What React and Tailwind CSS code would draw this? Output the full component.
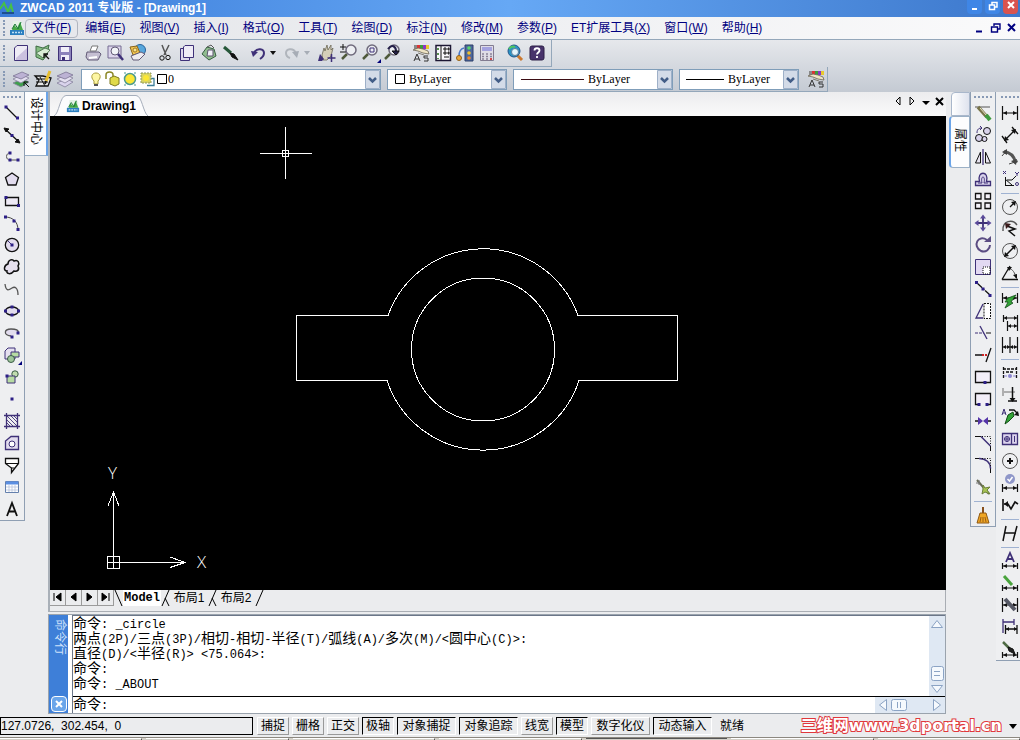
import clsx from "clsx"

const P = "#3f3178" // dark purple used by most tool icons
const L = "#d9d3ec" // lilac fill

const Svg = ({ children }) => (
  <svg viewBox="0 0 20 20" className="h-5 w-5 shrink-0" fill="none" stroke="#111" aria-hidden="true">
    {children}
  </svg>
)

const Dot = ({ x, y }) => <rect x={x - 1.5} y={y - 1.5} width="3" height="3" fill="#2c1f86" stroke="none" />
const Flyout = () => <path d="M20 16v4h-4z" fill="#00007a" stroke="none" />
const Lens = ({ x = 12, y = 7 }) => (
  <>
    <path d={`M${x - 4} ${y + 4}L${x - 9} ${y + 9}`} stroke="#4f5a3c" strokeWidth="2.5" />
    <circle cx={x} cy={y} r="5" fill="#eceef2" stroke="#6f6a7c" strokeWidth="1.5" />
  </>
)
const Layers = ({ bottom = L }) => (
  <>
    <path d="M2 14l9-4 7 3-8 5z" fill={bottom} stroke="#85809c" strokeWidth=".8" />
    <path d="M2 10l9-4 7 3-8 5z" fill="#e4e0f0" stroke="#85809c" strokeWidth=".8" />
    <path d="M2 7l9-4 7 3-8 4z" fill="#bcb2d4" stroke="#7c7594" strokeWidth=".8" />
  </>
)
const MatchProps = () => (
  <>
    <path d="M3 4h3" stroke="#888" strokeWidth="4" />
    <path d="M6 4h3" stroke="#d33" strokeWidth="4" />
    <path d="M9 4h3" stroke="#3a9d3a" strokeWidth="4" />
    <path d="M12 4h3" stroke="#8b35c8" strokeWidth="4" />
    <path d="M15 4h3" stroke="#e9c92c" strokeWidth="4" />
    <path d="M2 7l5 1 5 2 6 1-1-3-5-2-5-1zM7 10l6 2" fill="#eee4c4" stroke="#6b6554" strokeWidth=".8" />
    <path d="M3 18l3-7 3 7M4 16h4M17 13h-4v2h4v3h-4" stroke="#333" />
  </>
)
const DimLine = ({ y = 10, t = 5 }) => (
  <>
    <path d={`M2.5 ${y - t}v${t * 2}M17.5 ${y - t}v${t * 2}M3 ${y}h14`} strokeWidth="1.2" />
    <path d={`M3 ${y}l4-2v4zM17 ${y}l-4-2v4z`} fill="#111" stroke="none" />
  </>
)
const Bolt = () => <path d="M17 2l-9 4-4 10 5-3 1 5 7-9-4 1z" fill="#32a336" stroke="#124d16" strokeWidth=".8" />

const icons = {
  newFile: <><path d="M6 2.500h10.500v15h-13V5z" fill="#eeebf5" stroke={P} /><path d="M5 15l11-10v12H5z" fill="#cbc1df" stroke="none" /></>,
  open: <><path d="M3 3l7 2 6-3-2 10-4 5-7-3z" fill="#85bd82" stroke="#3d6b43" /><path d="M3 10l9-5 5 2-7 8z" fill="#d8edd5" stroke="#547c56" /><path d="M16 16l-5-5m0 4v-4h4" strokeWidth="1.3" /></>,
  save: <><path d="M3.500 3.500h13v14h-13z" fill="#8d83bb" stroke={P} /><path d="M6 4h8v5H6zM6 12h8v5H6z" fill="#f1eff8" stroke="none" /><path d="M7 14h3v3H7z" fill={P} stroke="none" /></>,
  print: <><path d="M7 8l2-5h6l-2 5z" fill="#fff" stroke="#777" /><path d="M4 9h12l2 2-3 6H5l-2-3z" fill="#c5bfd2" stroke="#635b77" /><path d="M6 15l8-1" stroke="#fff" strokeWidth="2" /></>,
  preview: <><path d="M3 3h13v12H3z" fill="#ddd6ec" stroke="#746b91" /><circle cx="10" cy="8" r="4" fill="#f2f4f7" stroke="#635b77" /><path d="M13 11l5 6" stroke={P} strokeWidth="2.5" /></>,
  publish: <><circle cx="13" cy="7" r="5.500" fill="#58a7dc" stroke="#28629b" /><path d="M3 4l7-1 3 7-7 2z" fill="#f3c551" stroke="#8a651b" /><circle cx="8" cy="7" r="2" fill="#fbe48c" stroke="#8a651b" strokeWidth=".8" /><path d="M4 13l10-4 4 2-6 6H6z" fill="#eeecf1" stroke="#635b77" /></>,
  cut: <><path d="M7 2l4 10M14 2L9 12" stroke="#555" strokeWidth="1.5" /><circle cx="7" cy="15" r="2.200" /><circle cx="13" cy="14.500" r="2.200" /></>,
  copy: <><path d="M3.500 5.500h9v12h-9z" fill="#ddd7ea" stroke={P} /><path d="M8 2.500h8.500v12H6.500V4z" fill="#efecf6" stroke={P} /></>,
  paste: <><path d="M8 4l7 2 2 7-7 4-7-6z" fill="#91bd90" stroke="#376041" /><path d="M9 7h5v6H8z" fill="#f4f2fa" stroke="#5c556e" /><path d="M8 4l4-2 3 3" stroke="#555" /></>,
  brush: <><path d="M3 4l7 6" stroke="#27583a" strokeWidth="3" /><path d="M9 10l4 1 4 6-6-3z" fill="#111" /></>,
  undo: <><path d="M6 10c3-6 10-4 10 0 0 2-1 4-4 6" stroke={P} strokeWidth="2" /><path d="M3 8l7 1-5 5z" fill={P} stroke="none" /></>,
  redo: <><path d="M14 10c-3-6-10-4-10 0 0 2 1 4 4 5" stroke="#b0b5bc" strokeWidth="2" /><path d="M17 8l-7 1 5 6z" fill="#a7adb6" stroke="none" /></>,
  pan: <><path d="M5 12l2-7 1 3 2-6 1 5 3-5v5l2-2-2 8-4 4H6z" fill="#d4ceb8" stroke="#6c6856" strokeWidth=".8" /><path d="M3 11l4 5-2 2H1z" fill={P} stroke="none" /><path d="M14.500 11v8M10.500 15h8" stroke={P} strokeWidth="1.500" /></>,
  zoomRt: <><Lens /><path d="M1 4h6M4 1v6M1 9h6" /></>,
  zoomWin: <><Lens x={11} /><path d="M9 5h4v4H9z" stroke={P} /><Flyout /></>,
  zoomPrev: <><Lens x={11} /><path d="M5 6c4-6 8-2 8 2" stroke="#25204a" strokeWidth="2" /><path d="M9 8h7l-3 4z" fill="#25204a" /></>,
  props: <MatchProps />,
  design: <><path d="M3 2.500h14.500v15H3z" fill="#f8f8fb" stroke="#1c1733" strokeWidth="1.500" /><path d="M8 3v14" /><path d="M5 5v2m0 3v2m0 3v1" stroke="#5a9150" strokeWidth="2" /><path d="M11 5h2v2h-2zM15 5h1v2h-1zM11 9h2v2h-2zM15 9h1v2h-1zM11 14h5" /></>,
  palette: <><path d="M10 2h8v16h-8z" fill="#4e689d" stroke="#2c3e68" /><circle cx="14" cy="5" r="1.800" fill="#58d768" stroke="none" /><circle cx="14" cy="10" r="1.800" fill="#eec12d" stroke="none" /><circle cx="14" cy="15" r="1.800" fill="#ee872d" stroke="none" /><path d="M9 5c-4 1-5 5-5 8" stroke="#4b79c7" strokeWidth="1.500" /><circle cx="4" cy="15" r="2.500" fill="#eaa83c" stroke="#936117" /></>,
  calc: <><path d="M3.500 2.500h13v15h-13z" fill="#dfdce6" stroke="#827c91" /><path d="M5 4h10v4H5z" fill="#a4a2df" stroke="none" /><path d="M5 11h2m2 0h2m2 0h2M5 13.500h2m2 0h2m2 0h2M5 16h2m2 0h2" stroke="#8a8298" strokeWidth="1.500" /><path d="M13 16h2" stroke="#d34a4a" strokeWidth="2" /></>,
  find: <><path d="M12 12l5 5" stroke="#cb7930" strokeWidth="3" /><circle cx="9" cy="8" r="6" fill="#2a93c3" stroke="#22558b" /><circle cx="10" cy="9" r="3.500" fill="#e5f5fb" stroke="#5a7d9b" /><path d="M4 6c2-3 4-3 6-2" stroke="#4ec661" strokeWidth="2" /></>,
  help: <><rect x="3" y="3" width="14" height="14" rx="2" fill="#48336b" stroke="#2c1f47" /><path d="M7.500 7.500c0-3 5-3 5 0 0 2-2.500 2-2.500 4M10 13v2" stroke="#fff" strokeWidth="1.800" /></>,
  layerPrev: <><Layers bottom="#3fa04d" /><path d="M18 18l-5-5m0 4v-4h4" /></>,
  layerMgr: <><path d="M2 7h8l8 2-3 8H3l3-6z" fill="#e8e8e8" strokeWidth="1.300" /><path d="M3 10h10M3 13h12M7 8l5 9" /><path d="M17 2l-4 10" stroke="#e6bd2e" strokeWidth="3" /><path d="M13 12l-1 3" strokeWidth="2" /></>,
  layerAll: <Layers />,
}

const drawIcons = {
  直线: <><path d="M4 4l11 11" strokeWidth="1.300" /><Dot x={4} y={4} /><Dot x={15.500} y={15} /></>,
  构造线: <><path d="M3 4l14 13" strokeWidth="1.300" /><path d="M2 3l5 1-3 3zM18 18l-5-1 3-3z" fill="#111" /><Dot x={10} y={10.500} /></>,
  多段线: <><path d="M9 6c-6-1-6 8 0 7h6" stroke="#555" /><Dot x={8} y={6} /><Dot x={8} y={13} /><Dot x={16} y={13} /></>,
  正多边形: <path d="M10 4l6.500 4.500-2.500 7.500H6L3.500 8.500z" fill="#e2dcee" strokeWidth="1.300" />,
  矩形: <><path d="M3.500 6.500h13v8h-13z" fill="#eeeaf5" strokeWidth="1.300" /><Dot x={4} y={6.500} /><Dot x={16.500} y={14.500} /></>,
  圆弧: <><path d="M3 4c8 0 13 5 13 13" stroke="#444" /><Dot x={3.500} y={4} /><Dot x={12} y={8} /><Dot x={16} y={16.500} /></>,
  圆: <><circle cx="10" cy="10" r="6.700" fill="#e2dcee" strokeWidth="1.300" /><path d="M10 10L6 6" stroke={P} /><Dot x={10} y={10} /></>,
  修订云线: <path d="M6 7c0-5 5-5 6-3 4-2 6 2 4 5 2 4-1 6-4 5-3 4-8 3-7 0-4 0-3-6 1-7z" fill="#e6e0ee" strokeWidth="1.500" />,
  样条曲线: <path d="M3 5c1 8 4 6 7 4s6 0 6 7" stroke="#555" strokeWidth="1.300" />,
  椭圆: <><ellipse cx="10" cy="10" rx="6.500" ry="4" fill="#e2dcee" strokeWidth="1.300" /><Dot x={3.500} y={10} /><Dot x={16.500} y={10} /><Dot x={10} y={6} /><Dot x={10} y={14} /></>,
  椭圆弧: <><path d="M9 13c-8-1-7-7 0-7 5 0 8 1 7 4" fill="#e2dcee" stroke="#555" strokeWidth="1.300" /><Dot x={10} y={14} /><Dot x={16} y={10} /></>,
  插入块: <><path d="M6 3h7v11H3V6z" fill="#e5e0f0" stroke={P} /><path d="M9 7h8v5H9z" fill="#b7dba3" stroke={P} /><circle cx="9" cy="14" r="3.500" fill="#9fc59a" stroke="#3a5b46" /><Flyout /></>,
  创建块: <><circle cx="13" cy="7" r="3.200" fill="#c0dcae" stroke="#3a5b46" /><path d="M5 9h8v7H5z" fill="#b7dba3" stroke={P} /><Dot x={5} y={9} /></>,
  点: <Dot x={10} y={10} />,
  图案填充: <><path d="M4.500 2v16M15.500 2v16M2 4.500h16M2 15.500h16" stroke={P} strokeWidth="1.300" /><path d="M5 9l6 6M5 5l10 10M9 5l6 6M5 12l3 3M12 5l3 3" stroke={P} strokeWidth=".9" /></>,
  面域: <><path d="M9 3.500h7.500v13h-13V8z" fill="#e2dcee" stroke={P} strokeWidth="1.300" /><circle cx="10" cy="11" r="3" stroke={P} fill="#fff" /></>,
  宽线: <><path d="M3.500 3.500h13v5l-7 9V13l-6-4.500z" fill="#fff" strokeWidth="1.300" /><path d="M3.500 8.500h13M9.500 13h3" /></>,
  表格: <><path d="M3.500 4.500h13v11h-13z" fill="#fff" stroke="#6480ad" /><path d="M4 6h12" stroke="#5b8fe2" strokeWidth="3" /><path d="M4 10h12M4 13h12M7 8v7M10 8v7M13 8v7" stroke="#b6c3dc" strokeWidth=".8" /></>,
  多行文字: <path d="M5 17l5-13 5 13M6.500 12.500h7" strokeWidth="1.800" />,
}

const modifyIcons = [
  ["删除", <><path d="M2 4h15" stroke="#555" /><path d="M5 4l9 10" stroke="#777348" strokeWidth="3.500" /><path d="M7 5l7 8" stroke="#e9e6c8" /><path d="M13 12l4 5" stroke="#3d9a3d" strokeWidth="4" /></>],
  ["复制对象", <><circle cx="14" cy="6" r="3.500" fill={L} /><circle cx="6" cy="13" r="3.500" fill={L} /><circle cx="11.500" cy="14" r="2.500" fill={L} /><path d="M4 8c0-4 2-5 5-5M7 1l2 2-2 2" stroke={P} /></>],
  ["镜像", <><path d="M7.500 5v11H2.500zM12.500 5v11h5z" fill="#e8e4f0" /><path d="M10 2v16" stroke={P} strokeWidth="1.300" /></>],
  ["偏移", <><path d="M2.500 16.500v-4h4c-3-11 10-11 7 0h4v4z" fill={L} stroke={P} strokeWidth="1.300" /><path d="M5 14h4c-2-8 4-8 2 0h4" stroke={P} /></>],
  ["阵列", <path d="M2.500 2.500h5.500v5.500H2.500zM12 2.500h5.500v5.500H12zM2.500 12h5.500v5.500H2.500zM12 12h5.500v5.500H12z" fill="#f5f3fa" strokeWidth="1.300" />],
  ["移动", <><path d="M10 3v14M3 10h14" stroke={P} strokeWidth="1.800" /><path d="M10 1.500l3 4H7zM10 18.500l3-4H7zM1.500 10l4-3v6zM18.500 10l-4-3v6z" fill="#5a4a9a" stroke="none" /></>],
  ["旋转", <><path d="M14 5c-9-6-15 6-6 11 5 2 9-2 9-6" stroke="#5b4d83" strokeWidth="2" /><path d="M11 7h7V1z" fill="#5b4d83" stroke="none" /></>],
  ["缩放", <><path d="M2.500 2.500h15v15h-15z" fill="#e2d9f2" stroke={P} /><path d="M10 10h7v7h-7z" fill="#fff" strokeDasharray="1 1" /></>],
  ["拉伸", <><path d="M4 4l13 12" strokeWidth="1.300" strokeDasharray="7 1 2 1" /><Dot x={3.500} y={3.500} /><Dot x={10} y={10} /><Dot x={17} y={16.500} /></>],
  ["锥化", <><path d="M10 3L3 17h7" stroke={P} strokeWidth="1.300" /><path d="M11 2.500h6.500v15H11z" fill="#fff" strokeDasharray="2 1" /></>],
  ["修剪", <><path d="M7 3l7 13" stroke={P} strokeWidth="1.300" /><path d="M2 10h9" stroke={P} strokeDasharray="3 1" /><path d="M13 10h5" /></>],
  ["延伸", <><path d="M2 10h8" strokeWidth="1.500" /><path d="M9 10h5" stroke="#c22" strokeWidth="2" strokeDasharray="2 1" /><path d="M18 3l-5 14" strokeWidth="1.300" /></>],
  ["打断于点", <><path d="M2.500 4.500h15v11h-15z" fill="#f2eef8" strokeWidth="1.300" /><Dot x={12} y={15.500} /></>],
  ["打断", <><path d="M5 15.500H2.500v-11h15v11H15" fill="#f2eef8" strokeWidth="1.300" /><Dot x={6} y={15.500} /><Dot x={14} y={15.500} /></>],
  ["合并", <><path d="M2 10h4M14 10h4" strokeWidth="1.500" /><path d="M5 6l5 4-5 4zM15 6l-5 4 5 4z" fill="#5434a8" stroke="none" /></>],
  ["倒角", <><path d="M2 3.500h6M17.500 13v5" /><path d="M8 3.500l9.500 9.500" stroke={P} strokeWidth="1.500" /><path d="M9 3.500h8.500V12" strokeDasharray="1 1.500" /></>],
  ["圆角", <><path d="M2 3.500h5M17.500 13v5" /><path d="M6 3.500c7 0 11.500 4 11.500 10" stroke={P} strokeWidth="1.500" /><path d="M9 3.500h8.500V12" strokeDasharray="1 1.500" /></>],
  ["分解", <><path d="M4 3l6 7 6 7" stroke="#676a55" strokeWidth="2" /><path d="M3 6h4M6 3v5" stroke="#777" /><path d="M10 8l2 3 5-1-3 3 3 4-5-2-3 2 1-5z" fill="#a7c453" stroke="#6c803c" /></>],
  null,
  ["清理", <><path d="M10 2v6" stroke="#884f1b" strokeWidth="2" /><path d="M7 8h6l3 10H4z" fill="#efa624" stroke="#8f5914" /><path d="M7 17l1-5M10 17v-5M13 17l-1-5" stroke="#9b5e14" /></>],
]

const dimIcons = [
  ["线性标注", <DimLine t={7} />],
  ["对齐标注", <><path d="M5 15L15 5M2 11l5 7M12 2l6 7" strokeWidth="1.300" /><path d="M4 16l1-5 4 4zM16 4l-5 1 4 4z" fill="#111" stroke="none" /></>],
  ["弧长标注", <><path d="M4 5c6 0 10 4 12 11" stroke="#555" strokeWidth="3" /><path d="M2 9l5-6M9 17l9-3" stroke="#444" /><path d="M2 5l5-3v6zM16 18l-5-4 6-2z" fill="#444" stroke="none" /></>],
  ["坐标标注", <><path d="M5.500 17V8M5 16.500h9M5 10l7 6M7 11h5l4-4" /><path d="M3 2l3 3m0-3L3 5M15 3l2 2 2-2m-2 2v2" stroke={P} /><circle cx="17" cy="15" r="1.500" stroke={P} /></>],
  null,
  ["半径标注", <><circle cx="10" cy="10" r="7.500" stroke="#555" /><path d="M10 10l4-4" strokeWidth="1.300" /><path d="M16 4l-1 5-4-4z" fill="#111" stroke="none" /></>],
  ["折弯标注", <><path d="M3 12C2 1 13 0 17 6" stroke="#555" strokeWidth="1.500" /><path d="M7 7l8 3-6 2 6 5" strokeWidth="1.500" /><path d="M5 4l6 1-5 5z" fill="#3b1b1b" stroke="none" /></>],
  ["直径标注", <><circle cx="10" cy="10" r="7.500" stroke="#555" /><path d="M5 15L15 5" strokeWidth="1.500" /><path d="M4 16l1-5 4 4zM16 4l-1 5-4-4z" fill="#111" stroke="none" /></>],
  ["角度标注", <><path d="M2 16.500h16M2 16.500L10 3" strokeWidth="1.300" /><path d="M8 5c5 1 7 5 8 10" stroke="#555" /><path d="M7 4l5 0-3 4zM17 16l-4-4 4-1z" fill="#111" stroke="none" /></>],
  null,
  ["快速标注", <><DimLine y={7} /><path d="M16 4l-8 3-3 4 3 0-3 6 8-5-2-1z" fill="#32a336" stroke="#124d16" strokeWidth=".8" /></>],
  ["基线标注", <><path d="M3.500 2v7M17.500 2v16M7.500 8v10M4 5h13M8 13h9" strokeWidth="1.200" /><path d="M4 5l3-2v4zM17 5l-3-2v4zM8 13l3-2v4zM17 13l-3-2v4z" fill="#111" stroke="none" /></>],
  ["连续标注", <><path d="M2.500 2v16M10 2v16M17.500 2v16M3 12h14" strokeWidth="1.200" /><path d="M3 12l3-2v4zM17 12l-3-2v4zM10 12l-3-2v4zM10 12l3-2v4z" fill="#111" stroke="none" /></>],
  null,
  ["标注间距", <><path d="M3.500 4v12M16.500 4v12M3 6h14M6 9h8" strokeWidth="1.300" strokeDasharray="3 1" /><circle cx="10" cy="13" r="2" fill="#8c86d0" stroke="none" /><path d="M4 13h3M13 13h3" stroke="#8c86d0" /></>],
  ["标注打断", <><path d="M3 3v8M4 7h11" stroke="#999" strokeWidth="1.500" /><path d="M12.500 2v14M8 16h9" strokeWidth="1.500" /><path d="M12.500 17l-3-4h6z" fill="#111" stroke="none" /></>],
  ["快速引线", <><path d="M13 5l-5 3-3 9 4-3 5-5z" fill="#32a336" stroke="#124d16" /><path d="M2 8l2-6 2 6M3 6h3" stroke={P} /><path d="M9 3h5l4 4" strokeWidth="1.300" /><path d="M19 9l-5-1 4-4z" fill="#111" stroke="none" /></>],
  ["公差", <><path d="M2.500 4.500h15v11h-15zM11.500 4v12" fill="#dcd4ee" stroke={P} strokeWidth="1.300" /><circle cx="7" cy="10" r="2.500" stroke={P} /><path d="M4 10h6M7 7v6M14.500 7v6" stroke={P} /></>],
  ["圆心标记", <><circle cx="10" cy="10" r="7.500" stroke="#555" /><path d="M10 7v6M7 10h6" strokeWidth="2" /></>],
  ["检验", <><DimLine y={15} t={4} /><circle cx="10" cy="6" r="5" fill="#8f97c9" stroke="none" /><path d="M7.500 6l2 2 3-4" stroke="#fff" strokeWidth="1.500" /></>],
  ["折弯线性", <><path d="M3 4v12M4 9h4l3 5 4-7 3 2" strokeWidth="1.600" /><path d="M4 9l4-3v6z" fill="#111" stroke="none" /></>],
  null,
  ["倾斜标注", <path d="M6 3L3 18M17 3l-4 15M5 10h11" strokeWidth="1.500" />],
  null,
  ["标注文字", <><DimLine y={15} t={3} /><path d="M6 11l4-9 4 9M7.500 8h5" stroke={P} strokeWidth="1.800" /></>],
  ["编辑标注", <><DimLine y={15} t={3} /><path d="M4 3l8 9" stroke="#48a33c" strokeWidth="3" /></>],
  ["标注更新", <><DimLine t={7} /><path d="M5 4l10 11" stroke="#555865" strokeWidth="4" /></>],
  ["替代", <><path d="M3 2v14M14 2v6M3 5h11" stroke={P} strokeWidth="1.300" /><path d="M5.500 8v9M17 8v9M6 12h11" strokeWidth="1.300" /><path d="M6 12l3-2v4zM17 12l-3-2v4z" fill="#111" stroke="none" /></>],
  ["标注样式", <><DimLine y={16} t={3} /><path d="M3 3l7 7" stroke="#4f6b45" strokeWidth="2.500" /><path d="M8 8l5 2 2 5-6-3z" fill="#222" /></>],
]

const menus = [
  ["文件", "F"], ["编辑", "E"], ["视图", "V"], ["插入", "I"], ["格式", "O"], ["工具", "T"],
  ["绘图", "D"], ["标注", "N"], ["修改", "M"], ["参数", "P"], ["ET扩展工具", "X"], ["窗口", "W"], ["帮助", "H"],
]

const standardBar = [
  ["新建", "newFile"], ["打开", "open"], ["保存", "save"], null,
  ["打印", "print"], ["打印预览", "preview"], ["发布", "publish"], null,
  ["剪切", "cut"], ["复制", "copy"], ["粘贴", "paste"], ["特性匹配", "brush"], null,
  ["放弃", "undo", "#111"], ["重做", "redo", "#a7adb6"],
  ["平移", "pan"], ["实时缩放", "zoomRt"], ["窗口缩放", "zoomWin"], ["缩放上一个", "zoomPrev"], null,
  ["特性", "props"], ["设计中心", "design"], ["工具选项板", "palette"], ["计算器", "calc"], null,
  ["查找", "find"], ["帮助", "help"],
]

const statusButtons = [
  ["捕捉", false], ["栅格", false], ["正交", false], ["极轴", true], ["对象捕捉", true], ["对象追踪", true],
  ["线宽", false], ["模型", true], ["数字化仪", false], ["动态输入", true],
]

const ZwLogo = ({ className }) => (
  <svg viewBox="0 0 16 16" className={className} aria-hidden="true">
    <path d="M4 1h8l2 3v6H3z" fill="#e4f1e6" />
    <path d="M1 10h14v5H1z" fill="#2b7fc0" />
    <path d="M3 10l2-5 3 3 3-6 3 8z" fill="#45a945" />
    <path d="M3 9l3-5 3 5 3-7" fill="none" stroke="#1f7a3c" />
    <path d="M3 12.500h10" stroke="#bfe0f5" strokeWidth="1.500" strokeDasharray="2 1" />
  </svg>
)

const GripV = () => <div className="h-4 w-0 shrink-0 border-l-2 border-dotted border-[#8799b5]" />
const GripH = () => <div className="my-1 h-0 w-[18px] border-t-2 border-dotted border-[#8799b5]" />

function Combo({ label, className, children, value }) {
  return (
    <label className={clsx("flex h-[21px] items-center border border-[#7f9db9] bg-white pl-1.5", className)}>
      {children}
      <select
        aria-label={label}
        defaultValue={value}
        className="min-w-0 flex-1 appearance-none bg-transparent font-['Liberation_Serif','Noto_Sans_CJK_SC',serif] text-[12px] leading-4 text-black outline-none"
      >
        <option>{value}</option>
      </select>
      <svg viewBox="0 0 15 19" className="h-[19px] w-[15px] shrink-0" aria-hidden="true">
        <path d="M.5.500h14v18H.500z" fill="#d3dbe8" stroke="#9eb0c8" />
        <path d="M4 8l3.500 3.500L11 8" fill="none" stroke="#425d87" strokeWidth="2.500" />
      </svg>
    </label>
  )
}

function VerticalBar({ items, className }) {
  return (
    <div className={clsx("flex flex-col items-center self-start border-b border-[#8f9fb3] bg-[#eeeff1]", className)}>
      <GripH />
      {items.map((item, i) =>
        item ? (
          <button key={item[0]} aria-label={item[0]} className="flex h-[22px] w-5 items-center justify-center">
            <Svg>{item[1]}</Svg>
          </button>
        ) : (
          <div key={i} className="mt-[3px] mb-[2px] h-px w-[18px] bg-[#9fb2d2]" />
        )
      )}
    </div>
  )
}

function WindowButton({ label, red, children }) {
  return (
    <button
      aria-label={label}
      className={clsx("flex h-3.5 w-[15px] items-start justify-center rounded-b-sm", red ? "bg-[#d9534f]" : "bg-[#3f86e6]")}
    >
      <svg viewBox="0 0 12 12" className="h-3 w-3" fill="none" stroke="#fff" strokeWidth="1.500">{children}</svg>
    </button>
  )
}

function Drawing() {
  return (
    <svg viewBox="0 0 896 474" className="block w-full bg-black" fill="none" stroke="#fff" shapeRendering="crispEdges">
      {/* part outline */}
      <path d="M338 199.500H246.500V264.500H337A101 101 0 0 0 529 264.500H627.500V199.500H528A101 101 0 0 0 338 199.500Z" />
      <circle cx="433" cy="233.500" r="71.500" />
      {/* crosshair */}
      <path d="M210 37.500h52M235.500 11v52M232.500 34.500h6v6h-6z" />
      {/* UCS icon */}
      <path d="M57.500 440.500h12v12h-12zM57 446.500h78M63.500 375v78" />
      <path d="M58 390l5.500-14 5.500 14M120 441l15 5.500-15 5" />
      <g fill="#fff" stroke="none" className="font-['Open_Sans',sans-serif] text-[17px] font-light">
        <text x="58" y="363">Y</text>
        <text x="147" y="452">X</text>
      </g>
    </svg>
  )
}

function CommandPanel() {
  const cjk = "text-[14px]"
  const line = "h-[15px]"
  return (
    <section className="mt-[2px] flex h-[100px] border border-[#9aa3ad] bg-white font-['Liberation_Mono','Noto_Sans_CJK_SC',monospace] text-[12px] leading-[15px] text-black">
      <div className="flex w-[19px] flex-col items-center justify-between bg-[#3e7fd8] pt-1 pb-px">
        <span className="text-[12px] leading-[12px] text-[#cfe2fb] [text-orientation:sideways] [writing-mode:vertical-rl]">命令行</span>
        <button aria-label="关闭命令行" className="flex h-4 w-4 items-center justify-center rounded-sm border border-white bg-[#6aa5ea]">
          <svg viewBox="0 0 10 10" className="h-2.5 w-2.5" stroke="#fff" strokeWidth="2"><path d="M2 2l6 6M8 2l-6 6" /></svg>
        </button>
      </div>
      <div className="ml-1 flex min-w-0 flex-1 flex-col border-t border-l border-[#6b7688]">
        <div className="flex flex-1">
          <div className="flex-1 whitespace-pre pt-px">
            <p className={line}><span className={cjk}>命令</span>: _circle</p>
            <p className={line}>
              <span className={cjk}>两点</span>(2P)/<span className={cjk}>三点</span>(3P)/<span className={cjk}>相切</span>-<span className={cjk}>相切</span>-<span className={cjk}>半径</span>(T)/<span className={cjk}>弧线</span>(A)/<span className={cjk}>多次</span>(M)/&lt;<span className={cjk}>圆中心</span>(C)&gt;:
            </p>
            <p className={line}><span className={cjk}>直径</span>(D)/&lt;<span className={cjk}>半径</span>(R)&gt; &lt;75.064&gt;:</p>
            <p className={line}><span className={cjk}>命令</span>:</p>
            <p className={line}><span className={cjk}>命令</span>: _ABOUT</p>
          </div>
          <svg viewBox="0 0 16 80" className="h-20 w-4 bg-[#dfe8f3]" fill="#f5f9fd" stroke="#8ba3c4" aria-hidden="true">
            <path d="M2.500 11.500l5.500-7 5.500 7zM2.500 69.500l5.500 7 5.500-7z" />
            <rect x="2.500" y="50.500" width="12" height="14" rx="2" />
            <path d="M5 55.500h6M5 59.500h6" />
          </svg>
        </div>
        <div className="flex h-[17px] items-center border-t border-black">
          <label htmlFor="cmd" className={line}><span className={cjk}>命令</span>:</label>
          <input id="cmd" className="min-w-0 flex-1 bg-transparent pl-2 outline-none" />
          <svg viewBox="0 0 70 16" className="h-4 w-[70px] bg-[#dfe8f3]" fill="#f5f9fd" stroke="#8ba3c4" aria-hidden="true">
            <path d="M11.500 2.500l-7 5.500 7 5.500zM58.500 2.500l7 5.500-7 5.500z" />
            <rect x="16.500" y="2.500" width="15" height="11" rx="2" />
            <path d="M22.500 5v6M25.500 5v6" />
          </svg>
        </div>
      </div>
    </section>
  )
}

function SheetTabs() {
  return (
    <div className="flex h-[22px] items-start border-r border-b border-[#a9adb3] bg-[#ebecee] text-black">
      {[
        ["第一个", "M4 3v8M11 3v8L6 7z"],
        ["上一个", "M10 3v8L5 7z"],
        ["下一个", "M5 3v8l5-4z"],
        ["最后一个", "M11 3v8M4 3v8l5-4z"],
      ].map(([label, d]) => (
        <button key={label} aria-label={label} className="h-4 w-4 border-r border-b border-[#9b9b9b]">
          <svg viewBox="0 0 15 15" className="h-[15px] w-[15px]" stroke="#000" fill="#000"><path d={d} /></svg>
        </button>
      ))}
      <div className="flex h-4 items-center font-['Liberation_Sans','Noto_Sans_CJK_SC',sans-serif] text-[12px] leading-4">
        <Slash d="M1 0l7 16" />
        <button className="bg-white px-px font-['Liberation_Mono',monospace] font-bold">Model</button>
        <Slash d="M8 0L1 16M4 8l4 8" />
        <button className="w-[38px]">布局1</button>
        <Slash d="M8 0L1 16M4 8l4 8" />
        <button className="w-[38px]">布局2</button>
        <Slash d="M8 0L1 16" />
      </div>
    </div>
  )
}

const Slash = ({ d }) => (
  <svg viewBox="0 0 9 16" className="h-4 w-[9px]" fill="none" stroke="#000" aria-hidden="true"><path d={d} /></svg>
)

export default function App() {
  return (
    <div className="flex min-h-screen flex-col overflow-hidden bg-[#ebecee] font-['Liberation_Sans','Noto_Sans_CJK_SC',sans-serif] text-[12px] leading-4">
      {/* title bar */}
      <header className="flex h-[17px] items-start justify-between bg-linear-to-r from-[#3a7bd8] via-[#66a8f5] to-[#3d78cc] pr-0.5">
        <div className="flex items-center">
          <svg viewBox="0 0 16 16" className="h-4 w-4" fill="none" stroke="#46c048" strokeWidth="2" aria-hidden="true">
            <path d="M0 9l4-6 4 9 3-7 2 7" />
            <path d="M2 13h12" stroke="#1d4e8e" />
          </svg>
          <h1 className="ml-1 text-[12px] leading-[14px] font-bold text-white">ZWCAD 2011 专业版 - [Drawing1]</h1>
        </div>
        <div className="flex gap-[3px]">
          <WindowButton label="最小化"><path d="M3 9h5" strokeWidth="2" /></WindowButton>
          <WindowButton label="还原"><path d="M5 5V2.500h5V7H8M2.500 5h5v4.500h-5z" /></WindowButton>
          <WindowButton label="关闭" red><path d="M3 2l6 6M9 2L3 8" strokeWidth="2" /></WindowButton>
        </div>
      </header>

      {/* menu bar */}
      <nav className="flex h-[23px] items-center border-b border-[#94a7ba] bg-linear-to-r from-[#e3e5e9] to-[#fafafb] pr-0.5 pl-[3px] text-[#000080]">
        <GripV />
        <ZwLogo className="ml-1 h-4 w-4" />
        {menus.map(([name, key], i) => (
          <button
            key={name}
            className={clsx(
              "h-[19px] shrink-0 px-1.5 leading-4 whitespace-nowrap",
              i === 0 ? "rounded-sm border border-[#b0b5bf] bg-[#e6e8ec]" : "border border-transparent"
            )}
          >
            {name}(<u>{key}</u>)
          </button>
        ))}
        <div className="ml-auto flex gap-1">
          {["M2 9.500h6", "M4 4V2h6v5H8M1.500 5h6v5h-6z", "M2 2l7 7M9 2L2 9"].map((d, i) => (
            <button key={d} aria-label={["最小化文档", "还原文档", "关闭文档"][i]}>
              <svg viewBox="0 0 12 12" className="h-3 w-3" fill="none" stroke="#000080" strokeWidth={i === 1 ? 1.4 : 2}><path d={d} /></svg>
            </button>
          ))}
        </div>
      </nav>

      {/* toolbars */}
      <div className="flex flex-col items-start bg-linear-to-b from-[#e6e8ec] to-[#c4cad3]">
        <div className="flex h-[27px] items-center border-r border-b border-[#94a7ba] pr-[3px] pl-[3px]">
          <GripV />
          <div className="ml-[5px] flex items-center">
            {standardBar.map((item, i) =>
              item ? (
                <button key={item[0]} aria-label={item[0]} className="flex h-[22px] min-w-[22px] items-center justify-center">
                  <Svg>{icons[item[1]]}</Svg>
                  {item[2] && (
                    <svg viewBox="0 0 10 8" className="mr-1 h-2 w-2.5" fill={item[2]}><path d="M2 2h6L5 6z" /></svg>
                  )}
                </button>
              ) : (
                <div key={i} className="w-[6px]" />
              )
            )}
          </div>
        </div>
        <div className="flex h-[25px] items-center border-r border-b border-[#94a7ba] pl-[3px]">
          <GripV />
          <div className="ml-[5px] flex w-[71px] items-center">
            {[["图层上一个", "layerPrev"], ["图层特性", "layerMgr"], ["图层", "layerAll"]].map(([label, k]) => (
              <button key={k} aria-label={label} className="flex h-[22px] w-[22px] items-center justify-center">
                <Svg>{icons[k]}</Svg>
              </button>
            ))}
          </div>
          <Combo label="图层控制" value="0" className="w-[300px]">
            <svg viewBox="0 0 80 18" className="h-[18px] w-20 shrink-0" fill="none" aria-hidden="true">
              <path d="M6 11c-4-4-2-8 2-8s6 4 2 8v3H6z" fill="#fdf6a4" stroke="#a99b3a" />
              <path d="M6 15h4" stroke="#555" strokeWidth="2" />
              <path d="M18 9V5c0-4 7-4 7 0v3" stroke="#8b8725" strokeWidth="1.500" />
              <path d="M22 8l4-2 5 2v6l-4 2-5-2z" fill="#e0da4a" stroke="#7e7a22" />
              <circle cx="42" cy="9" r="5.500" fill="#fbe736" stroke="#4d9a8e" strokeWidth="1.500" />
              <path d="M36 3h2M46 3h2M36 15h2M46 15h2" stroke="#4d9a8e" />
              <path d="M60 8.500h6v7h-7" fill="#fff" stroke="#3d7f9a" strokeWidth="1.300" />
              <path d="M53 3h10v10H53z" fill="#d9d463" stroke="#8c9760" strokeDasharray="2 1" />
              <circle cx="58" cy="8" r="3" fill="#fbe736" />
              <path d="M69.500 4.500h9v9h-9z" fill="#fff" stroke="#000" />
            </svg>
          </Combo>
          <Combo label="颜色控制" value="ByLayer" className="ml-[6px] w-[120px]">
            <svg viewBox="0 0 15 12" className="h-3 w-[15px] shrink-0" aria-hidden="true"><path d="M1.500 1.500h9v9h-9z" fill="#fff" stroke="#000" /></svg>
          </Combo>
          <Combo label="线型控制" value="ByLayer" className="ml-[6px] w-[160px]">
            <div className="mr-1 ml-px h-px w-[63px] shrink-0 bg-[#3b0d14]" />
          </Combo>
          <Combo label="线宽控制" value="ByLayer" className="ml-[6px] w-[120px]">
            <div className="mr-1 h-px w-[38px] shrink-0 bg-black" />
          </Combo>
          <button aria-label="特性匹配设置" className="ml-1.5 flex h-[22px] w-[22px] items-center justify-center">
            <Svg><MatchProps /></Svg>
          </button>
        </div>
      </div>

      {/* work area */}
      <main className="flex flex-1">
        <VerticalBar items={Object.entries(drawIcons)} className="w-[25px] border-r" />

        <div className="w-[23px] shrink-0">
          <button className="h-16 w-[23px] border-r-2 border-b border-[#6ba4e8] border-b-[#9bb0c6] bg-[#fdfdfe] leading-4 text-black">
            <span className="[text-orientation:sideways] [writing-mode:vertical-rl]">设计中心</span>
          </button>
        </div>

        <div className="min-w-0 flex-1">
          <div className="border-l-2 border-[#a9b0b8]">
            <div className="flex h-6 items-end justify-between bg-linear-to-b from-[#ececee] to-[#fafafa] pl-1">
              <div className="flex h-[21px] items-center">
                <svg viewBox="0 0 12 21" className="h-[21px] w-3" fill="#fcfcfd" aria-hidden="true">
                  <path d="M0 21C5 19 6 .5 12 .5V21z" />
                  <path d="M0 21C5 19 6 .5 12 .5" fill="none" stroke="#a6aebb" />
                </svg>
                <div className="flex h-[21px] items-center border-t border-[#a6aebb] bg-[#fcfcfd]">
                  <ZwLogo className="h-3.5 w-3.5" />
                  <span className="ml-0.5 text-[12px] font-bold text-black">Drawing1</span>
                </div>
                <svg viewBox="0 0 12 21" className="h-[21px] w-3" fill="#fcfcfd" aria-hidden="true">
                  <path d="M0 .5c6 0 7 17 12 20.500H0z" />
                  <path d="M0 .5c6 0 7 17 12 20.500" fill="none" stroke="#a6aebb" />
                </svg>
              </div>
              <div className="flex h-[21px] items-start gap-0.5">
                {[
                  ["向左滚动", "M8 2v8L4 6z", "none", 1],
                  ["向右滚动", "M4 2v8l4-4z", "none", 1],
                  ["文档列表", "M2 6h8L6 10z", "#000", 0],
                  ["关闭", "M2 3l7 7M9 3l-7 7", "none", 2],
                ].map(([label, d, fill, w]) => (
                  <button key={label} aria-label={label}>
                    <svg viewBox="0 0 12 12" className="h-3 w-3" fill={fill} stroke="#000" strokeWidth={w}><path d={d} /></svg>
                  </button>
                ))}
              </div>
            </div>
            <Drawing />
            <SheetTabs />
          </div>
          <CommandPanel />
        </div>

        <div className="ml-[3px] w-[21px] shrink-0">
          <div className="ml-0.5 h-6 rounded-tl border border-[#a9b7cb] bg-linear-to-r from-white to-[#dfe3ee]" />
          <button className="h-[52px] w-[21px] rounded-l-sm border border-l-2 border-[#9bb0c6] border-l-[#6ba4e8] bg-[#fdfdfe] text-black">
            <span className="[text-orientation:sideways] [writing-mode:vertical-rl]">属性</span>
          </button>
        </div>
        <VerticalBar items={modifyIcons} className="w-[26px] shrink-0 border-r border-l" />
        <VerticalBar items={dimIcons} className="w-6 shrink-0 pl-[3px]" />
      </main>

      {/* status bar */}
      <footer className="flex h-[23px] items-center text-black">
        <output className="mr-1 flex h-[18px] w-[253px] items-center border border-black whitespace-pre">
          {"127.0726,  302.454,  0"}
        </output>
        <div className="flex gap-[3px]">
          {statusButtons.map(([label, on]) => (
            <button
              key={label}
              aria-pressed={on}
              className={clsx(
                "h-[18px] border leading-4 whitespace-nowrap",
                label.length > 2 ? "w-[59px]" : "w-8",
                on ? "border-t-black border-r-white border-b-white border-l-black" : "border-t-white border-r-[#999] border-b-[#999] border-l-white"
              )}
            >
              {label}
            </button>
          ))}
        </div>
        <span className="ml-2">就绪</span>
        <a
          href="#portal"
          className="ml-auto font-['DejaVu_Sans','Noto_Sans_CJK_SC',sans-serif] text-[16px] leading-5 font-bold whitespace-nowrap text-white [-webkit-text-stroke:2px_#e0383c] [paint-order:stroke_fill]"
        >
          三维网www.3dportal.cn
        </a>
        <svg viewBox="0 0 10 10" className="mr-0.5 ml-1.5 h-2.5 w-2.5" aria-hidden="true"><path d="M1 3h8L5 8z" /></svg>
      </footer>
      <div className="flex h-[3px] gap-1 border-t border-[#8c8880] bg-[#d4d0c8]">
        {[0, 1, 2, 3, 4, 5, 6].map((n) => (
          <div key={n} className={clsx("flex-1 border-t", n === 4 ? "border-[#555]" : "border-r border-t-white border-r-[#555]")} />
        ))}
      </div>
    </div>
  )
}
